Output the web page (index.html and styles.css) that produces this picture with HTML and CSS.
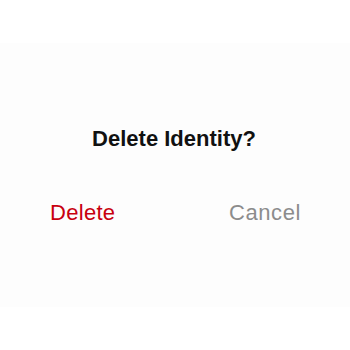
FILE: index.html
```html
<!DOCTYPE html>
<html>
<head>
<meta charset="utf-8">
<link rel="stylesheet" href="styles.css">
</head>
<body>
<div class="sheet">
  <div class="title">Delete Identity?</div>
  <div class="actions">
    <span class="btn btn-delete">Delete</span>
    <span class="btn btn-cancel">Cancel</span>
  </div>
</div>
</body>
</html>
```
FILE: styles.css
```css
html, body {
  margin: 0;
  padding: 0;
  background: #ffffff;
}
body {
  width: 350px;
  height: 350px;
  font-family: "Liberation Sans", Arial, sans-serif;
}
.sheet {
  margin-top: 43px;
  height: 264px;
  box-sizing: border-box;
  background: #fdfdfd;
  padding-top: 83px;
}
.title {
  text-align: center;
  font-size: 22px;
  line-height: 26px;
  font-weight: bold;
  color: #111111;
  padding-right: 2px;
}
.actions {
  display: flex;
  justify-content: space-between;
  margin-top: 48px;
  padding: 0 49px 0 50px;
}
.btn {
  font-size: 22px;
  line-height: 26px;
}
.btn-delete {
  color: #c8000f;
  letter-spacing: 0.3px;
}
.btn-cancel {
  color: #8c8c8c;
  letter-spacing: 0.6px;
}
```
